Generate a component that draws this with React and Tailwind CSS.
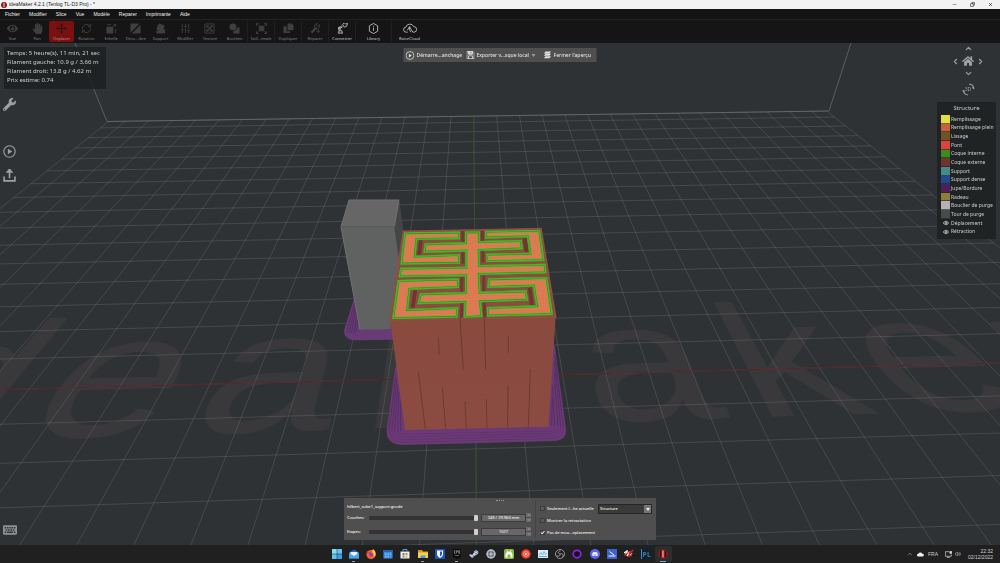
import React from "react";
import { FaEye, FaHandPaper, FaWrench, FaHome, FaKeyboard, FaSteamSymbol, FaDiscord } from "react-icons/fa";
import { Move, RefreshCw, SlidersVertical, ChevronUp, ChevronDown, ChevronLeft, ChevronRight, Eye, Minus, X, Copy, Volume2 } from "lucide-react";

/* Floor projection: (column, row) of the print bed, in 10 mm cells, to canvas pixels. */
const P = { a: 44.7, b: 27.42, c: 475.5, d: -0.395, e: -9.87, f: 377, g: 0.00207, h: 0.0581 };
const project = (i, j) => {
  const w = P.g * i + P.h * j + 1;
  return [(P.a * i + P.b * j + P.c) / w, (P.d * i + P.e * j + P.f) / w];
};
const EDGE = 15.7;
const FRONT = -5;
const columns = [-EDGE, ...Array.from({ length: 31 }, (_, k) => k - 15), EDGE];
const rows = [...Array.from({ length: 20 }, (_, k) => k - 4), EDGE];

const U = 40;
const originI = -17.9;
const originJ = 3.13;
const floorMatrix = [
  P.a / U, P.d / U, 0, P.g / U,
  -P.b / U, -P.e / U, 0, -P.h / U,
  0, 0, 1, 0,
  P.a * originI + P.b * originJ + P.c,
  P.d * originI + P.e * originJ + P.f,
  0,
  P.g * originI + P.h * originJ + 1,
];

function Line({ from, to, ...rest }) {
  const [x1, y1] = project(...from);
  const [x2, y2] = project(...to);
  return <line x1={x1} y1={y1} x2={x2} y2={y2} {...rest} />;
}

const topParts = [
  "M222 142L390 139L390 163L262 165L257 212L390 207L390 236L211 239Z",
  "M465 137L630 134L644 228L469 232L468 206L598 203L591 157L465 161Z",
  "M203 285L387 280L387 309L241 314L235 372L385 366L383 398L186 403Z",
  "M474 280L652 276L669 390L471 395L470 366L618 361L609 305L472 309Z",
  "M405 139L450 139L450 168L575 165L579 193L449 198L450 240L647 236L650 265L449 270L452 320L589 316L595 347L453 352L458 396L401 400L403 354L262 358L270 325L405 321L405 274L205 277L211 248L406 245L406 200L280 203L284 175L405 172Z",
];
const seams = [
  "M390 400L400 555", "M463 400L467 555", "M325 457L328 508", "M535 452L535 503", "M265 561L286 732", "M337 607L347 731",
  "M405 650L409 730", "M469 643L471 730", "M534 600L533 728", "M601 552L595 727",
];

function Model() {
  return (
    <g transform="translate(330 185) scale(0.3333)">
      <defs>
        <pattern id="hatch" width="5" height="5" patternUnits="userSpaceOnUse">
          <rect width="5" height="5" fill="#de7c54" />
          <rect width="2" height="2" fill="#cf6f49" />
        </pattern>
        <linearGradient id="front" x1="0" y1="0" x2="0" y2="1">
          <stop offset="0" stopColor="#8a4a3e" />
          <stop offset="1" stopColor="#8b4b42" />
        </linearGradient>
        {topParts.map((d, k) => (
          <clipPath key={d} id={`part${k}`}><path d={d} /></clipPath>
        ))}
      </defs>
      <path d="M74 335L42 436Q42 466 78 466L200 464V335Z" fill="#683a76" />
      <g fill="none" stroke="#4c2a5a" strokeWidth="2">
        <path d="M74 352L50 440M76 362L57 445M79 368L64 445M82 380L71 446M85 392L78 442" />
      </g>
      <path d="M208 45L222 150L208 260L193 125Z" fill="#454545" />
      <path d="M57 45L208 45L193 125L33 125Z" fill="#666666" />
      <path d="M33 125L193 125L210 250L180 433L90 434Z" fill="#606161" />
      <path d="M57 45L33 125L90 434M57 45H208M193 125L206 50" fill="none" stroke="#707173" strokeWidth="3" />
      <path d="M33 125L193 125" stroke="#5a5b5b" strokeWidth="2" />
      <path d="M196 545L170 736Q168 776 214 780L676 768Q712 764 708 732L674 480Z" fill="#6b3a76" />
      <g fill="none" stroke="#4b2858" strokeWidth="2">
        <path d="M198 565L178 730M200 580L186 734M203 600L194 738M207 620L203 740M212 650L212 738" />
        <path d="M675 510L700 725M674 530L692 724M672 560L684 722M668 600L674 720M667 640L665 722" />
      </g>
      <g fill="none" stroke="#5e326a" strokeWidth="2">
        <path d="M178 730Q178 770 216 772L674 760Q702 756 700 725" />
        <path d="M186 734Q188 762 218 764L672 752Q692 750 692 724" />
        <path d="M194 738Q198 754 220 756L668 745Q684 742 684 722" />
        <path d="M203 740Q206 747 222 748L664 738Q674 736 674 720" />
      </g>
      <path d="M220 139L633 131L677 396L180 405Z" fill="#8c4c40" />
      <path d="M180 403L677 395L655 725L225 735Z" fill="url(#front)" />
      <path d="M398 138L399 236M457 136L459 232M396 276L394 403M461 272L464 400" stroke="#713834" strokeWidth="9" />
      <path d="M273 166L267 210M584 160L590 202M256 316L248 368M599 308L606 360" stroke="#6e3532" strokeWidth="11" />
      {topParts.map((d, k) => (
        <g key={d} clipPath={`url(#part${k})`} fill="none">
          <path d={d} fill="url(#hatch)" stroke="#5fb733" strokeWidth="15" />
          <path d={d} stroke="#2f7d1d" strokeWidth="11" />
          <path d={d} stroke="#4db32a" strokeWidth="9" />
        </g>
      ))}
      <path d="M220 139L633 131L677 396L180 405Z" fill="none" stroke="#8f5044" strokeWidth="5" />
      {seams.map((d) => (
        <path key={d} d={d} stroke="#5b2f2c" strokeOpacity="0.75" strokeWidth="2.5" fill="none" />
      ))}
    </g>
  );
}

function Scene() {
  return (
    <div className="absolute inset-0 flex justify-center overflow-hidden" aria-hidden="true">
      <div className="relative w-[1000px] shrink-0">
        <div className="absolute left-0 -top-[43px]">
          <div
            className="w-[1440px] origin-top-left text-center font-[Liberation_Sans,Arial,sans-serif] text-[214px] leading-none tracking-widest text-[#39393b]"
            style={{ transform: `matrix3d(${floorMatrix.join(",")})` }}
          >
            ideaMaker
          </div>
        </div>
        <svg className="absolute left-0 -top-[43px] overflow-visible" width="1000" height="545" viewBox="0 0 1000 545">
          <g stroke="#7c7c7c" strokeOpacity="0.36" strokeWidth="0.9">
            {columns.map((i) => (
              <Line key={i} from={[i, FRONT]} to={[i, EDGE]} />
            ))}
            {rows.map((j) => (
              <Line key={j} from={[-EDGE, j]} to={[EDGE, j]} />
            ))}
          </g>
          <path d="M75 43L107 121.500L829 111L851 43" fill="none" stroke="#77797a" strokeOpacity="0.6" />
          <Line from={[-EDGE, 0]} to={[EDGE, 0]} stroke="#5c1f1d" strokeWidth="0.9" />
          <Line from={[0, FRONT]} to={[0, EDGE]} stroke="#28551f" strokeOpacity="0.75" strokeWidth="0.9" />
          <Model />
        </svg>
      </div>
    </div>
  );
}

const Svg = ({ children, className = "size-[11px]" }) => (
  <svg viewBox="0 0 24 24" className={className} fill="none" stroke="currentColor" strokeWidth="2">{children}</svg>
);
const PlayRing = ({ className }) => (
  <Svg className={className}><circle cx="12" cy="12" r="10.500" /><path d="M9 7l8 5-8 5z" fill="currentColor" stroke="none" /></Svg>
);
const ic = "size-[11px]";
const tools = [
  ["Vue", <FaEye className={ic} />],
  ["Pan", <FaHandPaper className={ic} />],
  ["Deplacer", <Move className={ic} />],
  ["Rotation", <RefreshCw className={ic} />],
  ["Echelle", <Svg><path d="M2 9h13v13H2z" fill="currentColor" /><path d="M2 3h9M21 13v9M14 10l7-7m0 0v5m0-5h-5" /></Svg>],
  ["Deco...ibre", <Svg><path d="M1 1h20L1 21zM23 4v19H4z" fill="currentColor" stroke="none" /></Svg>],
  ["Support", <Svg><path d="M8 2l12 4-4 12-12-4z" fill="currentColor" /><path d="M4 17v5h17v-8" fill="currentColor" /></Svg>],
  ["Modifier", <SlidersVertical className={ic} />],
  ["Texture", <Svg><path d="M2 2h20v20H2z" /><path d="M5 5h5v5H5zM14 5h5v5h-5zM9.500 9.500h5v5h-5zM5 14h5v5H5zM14 14h5v5h-5z" fill="currentColor" stroke="none" /></Svg>],
  ["Booléen", <Svg><circle cx="8.500" cy="8.500" r="7.500" fill="currentColor" stroke="none" /><path d="M18 10h5v13H9v-5a10 10 0 0 0 9-8z" fill="currentColor" stroke="none" /></Svg>],
];
const tools2 = [
  ["Taill...imale", <Svg><path d="M7 7h10v10H7z" fill="currentColor" /><path d="M1 6V1h5M1 1l5 5M18 1h5v5M23 1l-5 5M1 18v5h5M1 23l5-5M23 18v5h-5M23 23l-5-5" /></Svg>, false],
  ["Dupliquer", <Svg><path d="M10 1h9l4 4v11H10z" fill="currentColor" stroke="none" /><path d="M8 7H1v15h14v-4H8z" fill="currentColor" stroke="none" /></Svg>, false],
  ["Reparer", <Svg><path d="M3 21L14 10" strokeWidth="5" /><path d="M20 3l-4 4-2-1-1-2 3-3a6 6 0 0 0-6 8l3 3a6 6 0 0 0 7-9zM14 18h8M18 14v8" /></Svg>, false],
  ["Connecter", <Svg><path d="M2 22h11M4 22v-5h7v5M5 17l-2-6 8-5M8 16l-2-4 7-4M12 3l4 6 5-2 2-6-4 1-3-2z" /><circle cx="5" cy="11" r="2" /></Svg>, true],
];

function Tool({ label, icon, on, active, className = "" }) {
  return (
    <button
      type="button"
      className={`flex flex-col items-center gap-[2px] pt-[2px] text-[4px] leading-[6px] font-medium whitespace-nowrap ${active ? "rounded-[2px] bg-[#791111] text-[#2c1212]" : on ? "text-[#b8b8b8]" : "text-[#3f3f3f]"} ${className}`}
    >
      {icon}
      <span className={active ? "text-[#b87a7a]" : on ? "" : "text-[#747474]"}>{label}</span>
    </button>
  );
}

const legend = [
  ["Remplissage", "bg-[#e4df43]"], ["Remplissage plein", "bg-[#c5623c]"], ["Lissage", "bg-[#71532a]"], ["Pont", "bg-[#dc433c]"],
  ["Coque interne", "bg-[#3c8c1d]"], ["Coque externe", "bg-[#6d3430]"], ["Support", "bg-[#438a89]"], ["Support dense", "bg-[#25478d]"],
  ["Jupe/Bordure", "bg-[#4e2058]"], ["Radeau", "bg-[#907c39]"], ["Bouclier de purge", "bg-[#b4b4b4]"], ["Tour de purge", "bg-[#4a4a4a]"],
];

function Spin({ id, label, value, max }) {
  return (
    <div className="flex items-center">
      <label htmlFor={id} className="w-[22px]">{label}</label>
      <input
        id={id}
        type="range"
        min="0"
        max={max}
        defaultValue={max}
        className="h-[4px] min-w-0 flex-1 appearance-none rounded-[1px] bg-[#333] [&::-webkit-slider-thumb]:h-[6px] [&::-webkit-slider-thumb]:w-[4px] [&::-webkit-slider-thumb]:appearance-none [&::-webkit-slider-thumb]:rounded-[1px] [&::-webkit-slider-thumb]:bg-[#cfcfcf]"
      />
      <input
        type="text"
        aria-label={`${label} valeur`}
        defaultValue={value}
        className="ml-[3px] h-[8px] w-[45px] border border-[#3c3c3c] bg-[#676767] text-center leading-[6px] text-[#f0f0f0]"
      />
      <div className="flex w-[5px] flex-col gap-px">
        <button type="button" aria-label="Plus" className="flex h-[4px] items-center justify-center bg-[#6a6a6a]"><ChevronUp className="size-[4px]" /></button>
        <button type="button" aria-label="Moins" className="flex h-[4px] items-center justify-center bg-[#6a6a6a]"><ChevronDown className="size-[4px]" /></button>
      </div>
    </div>
  );
}

function Check({ children, ...props }) {
  return (
    <label className="flex items-center gap-[2px] whitespace-nowrap">
      <span className="grid size-[5px] shrink-0">
        <input type="checkbox" className="peer col-start-1 row-start-1 size-[5px] appearance-none border border-[#3b3b3b] bg-[#5a5a5a]" {...props} />
        <svg viewBox="0 0 10 10" className="invisible col-start-1 row-start-1 size-[5px] peer-checked:visible" fill="none" stroke="#eee" strokeWidth="2"><path d="M2 5l2 3 5-6" /></svg>
      </span>
      {children}
    </label>
  );
}

const AppIcon = ({ children }) => <svg viewBox="0 0 20 20" className="size-[10px]">{children}</svg>;
const apps = [
  ["Démarrer", <AppIcon><path d="M0 0h9.500v9.500H0z" fill="#86dcfb" /><path d="M10.500 0H20v9.500h-9.500zM0 10.500h9.500V20H0z" fill="#5fc3f5" /><path d="M10.500 10.500H20V20h-9.500z" fill="#3a9fec" /></AppIcon>],
  ["Courrier", <AppIcon><path d="M0 7l10-6 10 6v12H0z" fill="#1f6cc4" /><path d="M3 6h14v8H3z" fill="#e8f2fb" /><path d="M0 8l10 6 10-6v11H0z" fill="#4aa5ea" /></AppIcon>, "dot"],
  ["Firefox", <AppIcon><circle cx="10" cy="11" r="9" fill="#f7672a" /><path d="M14 0c6 4 7 12 3 16-2-1-1-6-3-8-2-1-2-5 0-8z" fill="#fdc735" /><path d="M2 4l3 2c4-2 7 0 6 2L5 9 1 12z" fill="#f43b3f" /><circle cx="10" cy="11.500" r="4" fill="#8440c9" /></AppIcon>],
  ["Calendrier", <AppIcon><path d="M1 2h18v17H1z" fill="#3f8fe0" /><path d="M1 2h18v4H1z" fill="#2265b8" /><path d="M4 9h3v3H4zM9 9h3v3H9zM14 9h2v3h-2zM4 14h3v3H4zM9 14h3v3H9z" fill="#7cbcf2" /></AppIcon>],
  ["Store", <AppIcon><path d="M1 5h18v14H1z" fill="#eee" /><path d="M6 5V1h8v4" fill="none" stroke="#49a9ed" strokeWidth="2" /><path d="M5 8h4v4H5z" fill="#e5532b" /><path d="M11 8h4v4h-4z" fill="#7cb83c" /><path d="M5 13h4v4H5z" fill="#2d9fe4" /><path d="M11 13h4v4h-4z" fill="#f0b72b" /></AppIcon>],
  ["Explorateur", <AppIcon><path d="M0 2h8l2 3h10v13H0z" fill="#d99a1c" /><path d="M0 7h20v11H0z" fill="#f9cf4f" /><path d="M5 13h10v5H5z" fill="#4496dd" /></AppIcon>, "dot"],
  ["Bitwarden", <AppIcon><rect width="20" height="20" rx="2" fill="#1e56c8" /><path d="M4 3h12v7c0 4-3 6-6 8-3-2-6-4-6-8z" fill="#fff" /><path d="M10 5h4v5c0 2-2 4-4 5z" fill="#1e56c8" /></AppIcon>],
  ["Epic", <AppIcon><path d="M2 0h16v16l-8 4-8-4z" fill="#0c0c0c" /><path d="M5 3v6M5 3h2M5 6h2M5 9h2M9 9V3h2v3H9M13 3v6M17 3h-2v6h2M6 13h8" stroke="#bbb" fill="none" /></AppIcon>, "dot"],
  ["Steam", <FaSteamSymbol className="size-[10px] text-[#c3d3ea]" />],
  ["Cura", <AppIcon><circle cx="10" cy="10" r="9.500" fill="#aeb6bd" /><circle cx="10" cy="10" r="6" fill="#55677a" /><circle cx="10" cy="10" r="3.500" fill="#d5a8c8" /><path d="M10 1v5M19 10h-5M10 19v-5M1 10h5" stroke="#dde" /></AppIcon>],
  ["Android", <AppIcon><rect width="20" height="20" rx="3" fill="#85b83c" /><path d="M3 12a7 7 0 0 1 14 0v5H3z" fill="#fff" /><path d="M5 2l3 4M15 2l-3 4" stroke="#fff" strokeWidth="1.500" /><path d="M7 13l3-3 3 3v4H7z" fill="#85b83c" /></AppIcon>],
  ["Musique", <AppIcon><circle cx="10" cy="10" r="9.500" fill="#f13b28" /><circle cx="10" cy="10" r="5" fill="none" stroke="#fff" /><path d="M8.500 7l4.500 3-4.500 3z" fill="#fff" /></AppIcon>],
  ["Moniteur", <AppIcon><path d="M0 2h20v16H0z" fill="#d8ebf7" /><path d="M2 12l4-5 3 5 3-7 3 6 3-3" fill="none" stroke="#5fa8da" strokeWidth="1.500" /><path d="M2 15h16" stroke="#5aa9dd" strokeWidth="2" /></AppIcon>],
  ["OBS", <AppIcon><circle cx="10" cy="10" r="9" fill="#1b1b1d" stroke="#bcbcbc" strokeWidth="1.500" /><path d="M10 10C5 9 6 4 11 4M10 10c4-3 8 2 5 6M10 10c1 5-5 6-7 2" fill="none" stroke="#9d9d9d" strokeWidth="2" /></AppIcon>],
  ["Anneau", <AppIcon><circle cx="10" cy="10" r="7.500" fill="#16091f" stroke="#8b25e0" strokeWidth="3.500" /></AppIcon>],
  ["Discord", <span className="flex size-[10px] items-center justify-center rounded-full bg-[#5865f2]"><FaDiscord className="size-[6px] text-white" /></span>],
  ["Scanner", <AppIcon><path d="M0 0h20v20H0z" fill="#3a63cf" /><path d="M5 5l9 7M3 14h14" stroke="#fff" strokeWidth="2" /></AppIcon>],
  ["Outil", <AppIcon><path d="M0 8l7-5-3 6 5-2-3 7 4-4 3 2 3-4" fill="none" stroke="#f2f2f2" strokeWidth="2.500" /><path d="M1 13l8-6M9 16l3-9 7-5M14 15l1-6" stroke="#e02d20" strokeWidth="2.500" fill="none" /></AppIcon>],
  ["PL", <span className="flex h-[10px] w-[10px] items-center justify-center border-l border-[#3b8ad0] bg-[#13202d] text-[7px] leading-none font-semibold text-[#3f86c4]">PL</span>],
  ["ideaMaker", <AppIcon><circle cx="10" cy="10" r="9.500" fill="#8e1717" /><path d="M5 4v12M15 4v12" stroke="#330b0b" strokeWidth="2" /><path d="M10 3v14" stroke="#f0e3e3" strokeWidth="2" /></AppIcon>, "active"],
];

export default function App() {
  return (
    <div className="flex h-screen flex-col overflow-hidden bg-[#2e3235] font-[Noto_Sans,sans-serif] text-[5px] leading-[7px] text-[#cfcfcf]">
      <header className="flex h-[9px] shrink-0 items-center bg-[#f2f2f2] pl-[1px] text-[#222]">
        <svg viewBox="0 0 20 20" className="size-[6px]"><circle cx="10" cy="10" r="10" fill="#8d1515" /><path d="M10 3v14" stroke="#fff" strokeWidth="3" /></svg>
        <h1 className="ml-[2px] flex-1 font-[Liberation_Sans,Arial,sans-serif]">ideaMaker 4.2.1 (Tenlog TL-D3 Pro) - *</h1>
        <div className="flex gap-[13px] pr-[7px]">
          <button type="button" aria-label="Réduire"><Minus className="size-[5px]" /></button>
          <button type="button" aria-label="Restaurer"><Copy className="size-[5px] -scale-x-100" strokeWidth={3} /></button>
          <button type="button" aria-label="Fermer"><X className="size-[5px]" strokeWidth={3} /></button>
        </div>
      </header>

      <nav className="flex h-[11px] shrink-0 items-center gap-[9px] border-b border-[#222] bg-[#141414] pl-[5px] font-[Liberation_Sans,Arial,sans-serif] text-[#f0f0f0]">
        {["Fichier", "Modifier", "Slice", "Vue", "Modèle", "Reparer", "Imprimante", "Aide"].map((m) => (
          <button type="button" key={m}>{m}</button>
        ))}
      </nav>

      <div className="flex h-[23px] shrink-0 bg-[#151515] pb-px">
        <div className="grid w-[247px] grid-cols-10 pt-px">
          {tools.map(([label, icon]) => (
            <Tool key={label} label={label} icon={icon} active={label === "Deplacer"} />
          ))}
        </div>
        {tools2.map(([label, icon, on]) => (
          <Tool key={label} label={label} icon={icon} on={on} className="mt-px w-[27px] border-l border-[#202020]" />
        ))}
        <Tool
          on
          label="Library"
          className="mt-px w-[37px] border-x border-[#202020]"
          icon={<Svg><path d="M12 1l9 5v12l-9 5-9-5V6z" /><path d="M12 10v7M12 6v2" /></Svg>}
        />
        <Tool
          on
          label="RaiseCloud"
          className="mt-px w-[35px]"
          icon={<svg viewBox="0 0 30 24" className="h-[11px] w-[14px]" fill="none" stroke="currentColor" strokeWidth="2"><path d="M10 20H7a5.500 5.500 0 0 1-1-11 9 9 0 0 1 17-1 6 6 0 0 1 1 12h-3l-7-12-5 8M14 8v7l3 5" /></svg>}
        />
      </div>

      <main className="relative min-h-0 flex-1 overflow-hidden">
        <Scene />

        <div className="absolute top-[4px] left-[4px] w-[102px] bg-[#1c1e1f]/80 px-[3px] pt-[2px] pb-[4px] text-[6px] leading-[9px] whitespace-nowrap">
          <p>Temps: 5 heure(s), 11 min, 21 sec</p>
          <p>Filament gauche: 10.9 g / 3.66 m</p>
          <p>Filament droit: 13.8 g / 4.62 m</p>
          <p>Prix estime: 0.74</p>
        </div>

        <div className="absolute top-[55px] left-[3px] flex flex-col items-center text-[#a0a0a0]">
          <button type="button" aria-label="Réglages"><FaWrench className="size-[13px]" /></button>
          <button type="button" aria-label="Démarrer" className="mt-[34px]"><PlayRing className="size-[13px]" /></button>
          <button type="button" aria-label="Envoyer" className="mt-[11px]">
            <Svg className="size-[13px]"><path d="M2 14v8h20v-8M12 17V4" strokeWidth="3" /><path d="M12 0l5 6H7z" fill="currentColor" /></Svg>
          </button>
        </div>
        <button type="button" aria-label="Clavier" className="absolute bottom-[8px] left-[3px] text-[#8f9192]"><FaKeyboard className="size-[14px]" /></button>

        <div className="absolute top-[5px] left-1/2 flex h-[14px] w-[193px] -translate-x-1/2 items-center bg-[#4f4f4f] pl-[2px] font-medium whitespace-nowrap text-[#e0e0e0]">
          <button type="button" className="flex w-[59px] items-center gap-[2px]"><PlayRing className="size-[9px] shrink-0" />Démarre...anchage</button>
          <button type="button" className="flex h-[12px] w-[75px] items-center gap-[2px] border-l border-[#454545] pl-px">
            <svg viewBox="0 0 20 20" className="size-[8px] shrink-0" fill="none" stroke="currentColor" strokeWidth="2"><path d="M1 1h15l3 3v15H1z" /><path d="M5 1v7h10V1z" fill="currentColor" /><path d="M11 2v4" stroke="#4f4f4f" /><path d="M5 19v-7h10v7" /></svg>
            Exporter v...sque local
            <svg viewBox="0 0 8 6" className="ml-px h-[3px] w-[4px] shrink-0"><path d="M0 0h8L4 6z" fill="#9a9a9a" /></svg>
          </button>
          <button type="button" className="flex items-center gap-[2px] pl-[4px]">
            <svg viewBox="0 0 20 20" className="size-[8px] shrink-0" fill="currentColor"><path d="M5 1h14l-4 5H1zM5 7h14l-4 5H1zM5 13h14l-4 5H1z" /></svg>
            Fermer l'aperçu
          </button>
        </div>

        <div className="absolute top-[1px] right-[14px] flex w-[36px] flex-col items-center text-[#a0a0a0]">
          <button type="button" aria-label="Haut"><ChevronUp className="size-[9px]" strokeWidth={3} /></button>
          <div className="my-[2px] flex items-center gap-[2px]">
            <button type="button" aria-label="Gauche"><ChevronLeft className="size-[9px]" strokeWidth={3} /></button>
            <button type="button" aria-label="Accueil"><FaHome className="size-[12px]" /></button>
            <button type="button" aria-label="Droite"><ChevronRight className="size-[9px]" strokeWidth={3} /></button>
          </div>
          <button type="button" aria-label="Bas"><ChevronDown className="size-[9px]" strokeWidth={3} /></button>
          <button type="button" className="mt-[5px] grid size-[13px] place-items-center text-[5px] leading-none">
            <svg viewBox="0 0 24 24" className="col-start-1 row-start-1 size-[13px]" fill="none" stroke="currentColor" strokeWidth="2"><path d="M13 2a10 10 0 0 1 9 9M11 22a10 10 0 0 1-9-9M22 11l-3-3M2 13l3 3" /></svg>
            <span className="col-start-1 row-start-1">3D</span>
          </button>
        </div>

        <section className="absolute top-[59px] right-[4px] w-[59px] bg-[#202324]/95 px-[4px] pt-[2px] pb-[3px] whitespace-nowrap">
          <h2 className="h-[11px] text-center text-[6px] leading-[9px]">Structure</h2>
          <ul className="grid h-[121px] auto-rows-fr">
            {legend.map(([label, color]) => (
              <li key={label} className="flex items-center gap-px">
                <span className={`h-full w-[9px] shrink-0 border-b border-[#202324]/60 ${color}`} />
                {label}
              </li>
            ))}
            {["Déplacement", "Rétraction"].map((label) => (
              <li key={label} className="flex items-center gap-px">
                <span className="flex w-[9px] shrink-0 justify-center"><Eye className="size-[6px]" strokeWidth={3} /></span>
                {label}
              </li>
            ))}
          </ul>
        </section>

        <section className="absolute bottom-[5px] left-1/2 h-[42px] w-[312px] -translate-x-1/2 bg-[#4f4f4f] pt-[2px] text-[4px] font-medium text-[#f4f4f4]">
          <div className="mx-auto w-[8px] border-t border-dotted border-[#999]" />
          <div className="flex h-[36px]">
            <div className="flex w-[187px] flex-col pt-[2px] pl-[3px]">
              <p className="mb-[2px] leading-[8px]">hilbert_cube1_support.gcode</p>
              <div className="flex flex-col gap-[5px]">
                <Spin id="layers" label="Couches:" value="249 / 29.960 mm" max="249" />
                <Spin id="steps" label="Etapes:" value="1027" max="1027" />
              </div>
            </div>
            <div className="ml-[4px] flex flex-1 items-start justify-between border-l border-[#434343] pt-[3px] pr-[4px] pl-[4px]">
              <div className="flex flex-col gap-[5px] pt-px">
                <Check>Seulement l...he actuelle</Check>
                <Check>Montrer la retractation</Check>
                <Check defaultChecked>Pas de mou...eplacement</Check>
              </div>
              <div className="flex h-[10px] w-[54px] border border-[#262626] bg-[#3a3a3a]">
                <select aria-label="Affichage" className="h-[8px] min-w-0 flex-1 appearance-none pl-px leading-[8px]">
                  <option>Structure</option>
                </select>
                <span className="pointer-events-none flex w-[7px] items-center justify-center bg-[#757575]">
                  <svg viewBox="0 0 8 6" className="h-[3px] w-[4px]"><path d="M0 0h8L4 6z" fill="#eee" /></svg>
                </span>
              </div>
            </div>
          </div>
        </section>
      </main>

      <footer className="grid h-[18px] shrink-0 grid-cols-[1fr_344px_1fr] items-stretch bg-[#202020]">
        <div />
        <div className="grid grid-cols-20">
          {apps.map(([name, icon, state]) => (
            <button
              type="button"
              key={name}
              aria-label={name}
              className={`relative flex items-center justify-center ${state === "active" ? "my-px rounded-[2px] bg-[#2d2d2d]" : ""}`}
            >
              {icon}
              {state === "dot" && <span className="absolute bottom-[1px] h-px w-[3px] bg-[#9a9a9a]" />}
              {state === "active" && <span className="absolute bottom-0 h-px w-[6px] bg-[#58b5f0]" />}
            </button>
          ))}
        </div>
        <div className="flex items-center justify-end pr-[7px]">
          <ChevronUp className="size-[6px]" />
          <svg viewBox="0 0 20 14" className="ml-[4px] h-[5px] w-[7px]"><path d="M4 13a4 4 0 0 1 0-8 6 6 0 0 1 11 0 4 4 0 0 1 1 8z" fill="#f0f0f0" /></svg>
          <span className="ml-[4px] font-[Liberation_Sans,Arial,sans-serif]">FRA</span>
          <svg viewBox="0 0 20 20" className="ml-[7px] size-[7px]" fill="none" stroke="#ddd" strokeWidth="2"><path d="M12 2H1v13h17v-5M5 19h9" /><path d="M14 1h5v6h-5z" fill="#ddd" /></svg>
          <Volume2 className="ml-[3px] size-[6px]" />
          <time className="ml-[7px] text-right font-[Liberation_Sans,Arial,sans-serif] leading-[6px]">22:32<br />02/12/2022</time>
        </div>
      </footer>
    </div>
  );
}
